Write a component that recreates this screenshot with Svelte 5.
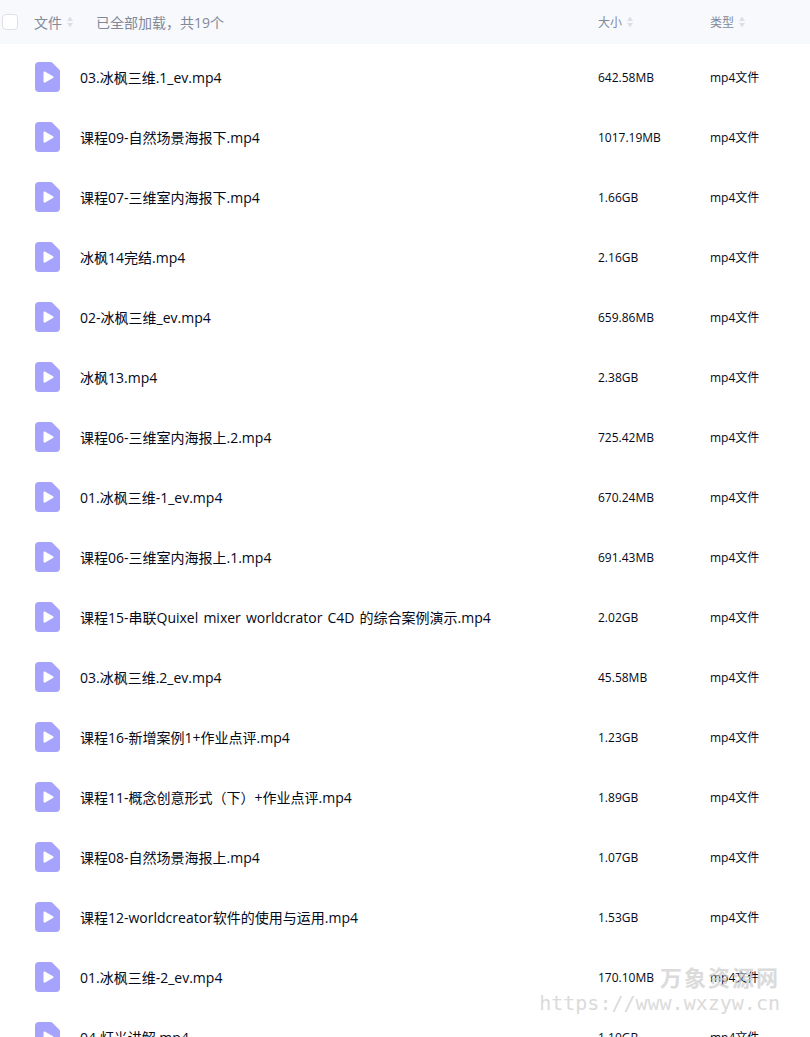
<script>
  const files = [
    ['03.冰枫三维.1_ev.mp4', '642.58MB'],
    ['课程09-自然场景海报下.mp4', '1017.19MB'],
    ['课程07-三维室内海报下.mp4', '1.66GB'],
    ['冰枫14完结.mp4', '2.16GB'],
    ['02-冰枫三维_ev.mp4', '659.86MB'],
    ['冰枫13.mp4', '2.38GB'],
    ['课程06-三维室内海报上.2.mp4', '725.42MB'],
    ['01.冰枫三维-1_ev.mp4', '670.24MB'],
    ['课程06-三维室内海报上.1.mp4', '691.43MB'],
    ['课程15-串联Quixel mixer worldcrator C4D 的综合案例演示.mp4', '2.02GB'],
    ['03.冰枫三维.2_ev.mp4', '45.58MB'],
    ['课程16-新增案例1+作业点评.mp4', '1.23GB'],
    ['课程11-概念创意形式（下）+作业点评.mp4', '1.89GB'],
    ['课程08-自然场景海报上.mp4', '1.07GB'],
    ['课程12-worldcreator软件的使用与运用.mp4', '1.53GB'],
    ['01.冰枫三维-2_ev.mp4', '170.10MB'],
    ['04.灯光讲解.mp4', '1.10GB']
  ];
</script>

{#snippet sorter()}
  <svg class="sort" width="6" height="12" viewBox="0 0 6 12"><path d="M3 .5 6 5H0zM3 11.500 0 7h6z" fill="#dcdfe6" /></svg>
{/snippet}

<div class="page">
  <header class="head">
    <span class="check"></span>
    <div class="c-name">
      <span>文件</span>{@render sorter()}
      <span class="loaded">已全部加载，共19个</span>
    </div>
    <div class="c-size"><span>大小</span>{@render sorter()}</div>
    <div class="c-type"><span>类型</span>{@render sorter()}</div>
  </header>
  <ul class="list">
    {#each files as [name, size]}
      <li class="row">
        <svg class="icon" width="25" height="30" viewBox="0 0 25 30">
          <path d="M4 0H15.500a3 3 0 0 1 2.100.9L24.100 7.400a3 3 0 0 1 .9 2.100V26a4 4 0 0 1-4 4H4a4 4 0 0 1-4-4V4a4 4 0 0 1 4-4Z" fill="#a5a3fb" />
          <path d="M8.500 10.700c0-.9 1-1.500 1.700-1L18 14.200c.7.400.7 1.400 0 1.800l-7.800 4.500c-.7.500-1.700-.100-1.700-1Z" fill="#fff" />
        </svg>
        <span class="name">{name}</span>
        <span class="size">{size}</span>
        <span class="type">mp4文件</span>
      </li>
    {/each}
  </ul>
  <div class="mark">
    <div class="mark-cn">万象资源网</div>
    <div class="mark-url">https://www.wxzyw.cn</div>
  </div>
</div>

<style>
  :global(body) { margin: 0; background: #fff; }
  .page {
    position: relative;
    width: 810px;
    height: 1037px;
    overflow: hidden;
    font-family: "Open Sans", "Noto Sans CJK SC", sans-serif;
    color: #03081a;
  }
  .head {
    display: flex;
    align-items: center;
    height: 44px;
    background: #f7f9fc;
    color: #818999;
    font-size: 12px;
  }
  .check {
    box-sizing: border-box;
    width: 16px;
    height: 16px;
    margin-left: 2px;
    border: 1px solid #dfe1e6;
    border-radius: 4px;
    background: #fff;
  }
  .c-name { display: flex; align-items: center; width: 580px; padding-left: 16px; box-sizing: border-box; font-size: 14px; }
  .c-size { display: flex; align-items: center; width: 112px; }
  .c-type { display: flex; align-items: center; }
  .sort { margin-left: 5px; }
  .loaded { margin-left: 23px; }
  .list { list-style: none; margin: 3px 0 0; padding: 0; }
  .row { display: flex; align-items: center; height: 60px; font-size: 14px; }
  .icon { margin-left: 35px; flex: none; }
  .name { width: 518px; margin-left: 20px; white-space: nowrap; word-spacing: 1.5px; }
  .size { width: 112px; font-size: 12px; }
  .type { font-size: 12px; }
  .mark {
    position: absolute;
    right: 30px;
    top: 962px;
    text-align: right;
    color: #ccc;
    opacity: 0.7;
    pointer-events: none;
  }
  .mark-cn { font-size: 22px; line-height: 28px; font-weight: 700; letter-spacing: 2px; font-family: "Noto Sans CJK SC", sans-serif; }
  .mark-url { font-size: 20px; line-height: 26px; font-family: "DejaVu Sans Mono", monospace; }
</style>
